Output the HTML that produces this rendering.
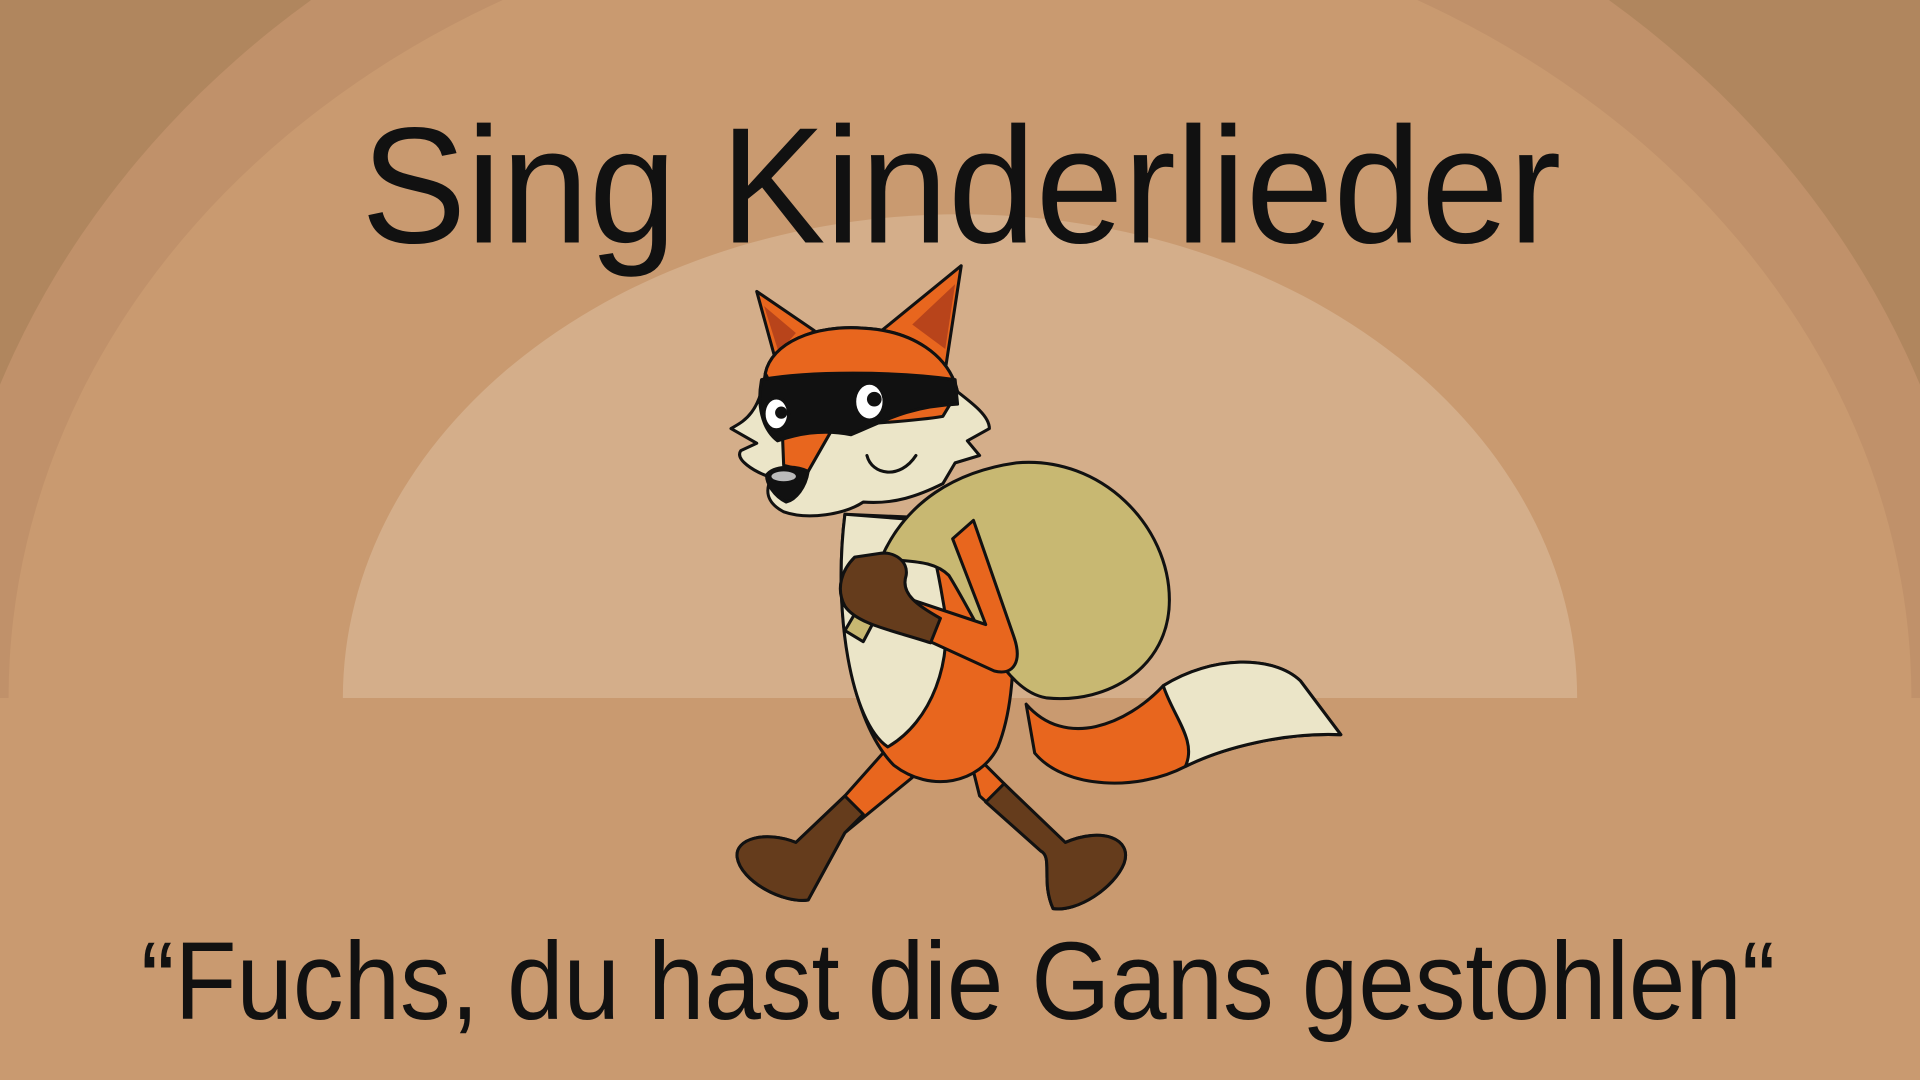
<!DOCTYPE html>
<html><head><meta charset="utf-8"><style>
html,body{margin:0;padding:0;width:1920px;height:1080px;overflow:hidden;background:#c99a70}
svg{display:block;position:absolute;left:0;top:0}
</style></head><body>
<svg width="1920" height="1080" viewBox="0 0 1568 882" preserveAspectRatio="none" xmlns="http://www.w3.org/2000/svg">
<defs><clipPath id="top"><rect x="0" y="0" width="1568" height="570"/></clipPath></defs>
<rect width="1568" height="882" fill="#c99a70"/>
<g clip-path="url(#top)">
<rect width="1568" height="570" fill="#b0865e"/>
<ellipse cx="784" cy="570" rx="836" ry="737" fill="#c0916a"/>
<ellipse cx="784" cy="570" rx="777" ry="650" fill="#c99a70"/>
<ellipse cx="784" cy="570" rx="504" ry="395" fill="#d4ae8a"/>
</g>
<text x="295" y="198" textLength="980" lengthAdjust="spacingAndGlyphs" font-family="Liberation Sans, sans-serif" font-size="135" fill="#111">Sing Kinderlieder</text>
<text x="115" y="832" textLength="1335" lengthAdjust="spacingAndGlyphs" font-family="Liberation Sans, sans-serif" font-size="90" fill="#111">“Fuchs, du hast die Gans gestohlen“</text>

<g stroke="#111" stroke-width="2.5" stroke-linejoin="round" stroke-linecap="round">
<path d="M838,575 C870,612 920,592 950,560 C990,535 1040,535 1062,556 L1095,600 C1050,598 1000,610 968,626 C930,646 870,645 845,615 Z" fill="#e8661e"/>
<path d="M950,560 C990,535 1040,535 1062,556 L1095,600 C1050,598 1000,610 968,626 C978,605 958,585 950,560 Z" fill="#ebe5c8"/>
<path d="M730,605 L690,650 L650,688 C625,678 600,685 602,700 C605,720 640,738 660,735 L690,680 L745,635 Z" fill="#e8661e"/>
<path d="M690,650 L650,688 C625,678 600,685 602,700 C605,720 640,738 660,735 L690,680 L705,665 Z" fill="#653c1c"/>
<path d="M790,610 L830,650 L870,688 C900,675 925,685 918,705 C910,725 880,745 860,742 C850,720 860,700 850,695 L800,650 Z" fill="#e8661e"/>
<path d="M820,640 L870,688 C900,675 925,685 918,705 C910,725 880,745 860,742 C850,720 860,700 850,695 L805,655 Z" fill="#653c1c"/>
<path d="M690,420 C680,500 695,590 730,625 C760,648 800,640 815,610 C835,560 830,470 805,425 Z" fill="#e8661e"/>
<path d="M690,420 C680,500 695,590 725,610 C760,590 780,540 770,490 C765,460 760,440 755,425 Z" fill="#ebe5c8"/>
<path d="M720,455 C740,410 780,385 830,378 C900,372 955,430 955,490 C955,545 905,575 855,570 C820,565 800,510 775,470 C760,455 735,460 720,455 Z" fill="#c8b872"/>
<path d="M700,498 L690,515 L705,524 L715,505 Z" fill="#c8b872"/>
<path d="M795,425 L828,520 C835,540 828,552 812,548 L740,515 L745,490 L805,510 L778,440 Z" fill="#e8661e"/>
<path d="M698,455 C688,465 682,480 690,495 C700,510 730,515 760,525 L768,505 C750,495 735,485 740,470 C742,458 730,450 718,452 Z" fill="#653c1c"/>
<path d="M618,238 L665,270 L635,300 Z" fill="#e8661e"/>
<path d="M785,217 L720,270 L772,302 Z" fill="#e8661e"/>
<path d="M624,250 L650,272 L636,288 Z" fill="#b8441b" stroke="none"/>
<path d="M780,232 L745,265 L772,285 Z" fill="#b8441b" stroke="none"/>
<path d="M625,305 C630,280 665,265 705,268 C745,270 775,290 782,320 C795,330 808,340 808,350 L790,360 L800,372 L780,378 L770,395 C750,405 730,412 705,410 C690,420 660,425 640,418 C625,410 625,400 630,390 C615,385 600,375 605,368 L618,362 L597,350 C605,345 620,340 625,305 Z" fill="#ebe5c8"/>
<path d="M625,305 C630,280 665,265 705,268 C745,270 775,290 782,320 L770,340 C740,345 705,345 680,350 L660,385 L640,380 L638,330 Z" fill="#e8661e"/>
<path d="M622,310 C660,303 730,303 780,310 L782,330 C740,332 720,345 695,355 C670,350 650,355 635,360 C622,350 618,330 622,310 Z" fill="#111"/>
<ellipse cx="634" cy="338" rx="10" ry="13" fill="#fff"/>
<circle cx="638" cy="337" r="5" fill="#111" stroke="none"/>
<ellipse cx="710" cy="328" rx="12" ry="15" fill="#fff"/>
<circle cx="714" cy="326" r="6" fill="#111" stroke="none"/>
<path d="M626,388 C632,380 650,380 660,385 C658,398 650,408 642,410 C632,405 626,395 626,388 Z" fill="#111"/>
<ellipse cx="640" cy="389" rx="10" ry="4" fill="#bbb" stroke="none"/>
<path d="M708,372 C712,388 735,392 748,372" fill="none"/>
</g>
</svg>
</body></html>
